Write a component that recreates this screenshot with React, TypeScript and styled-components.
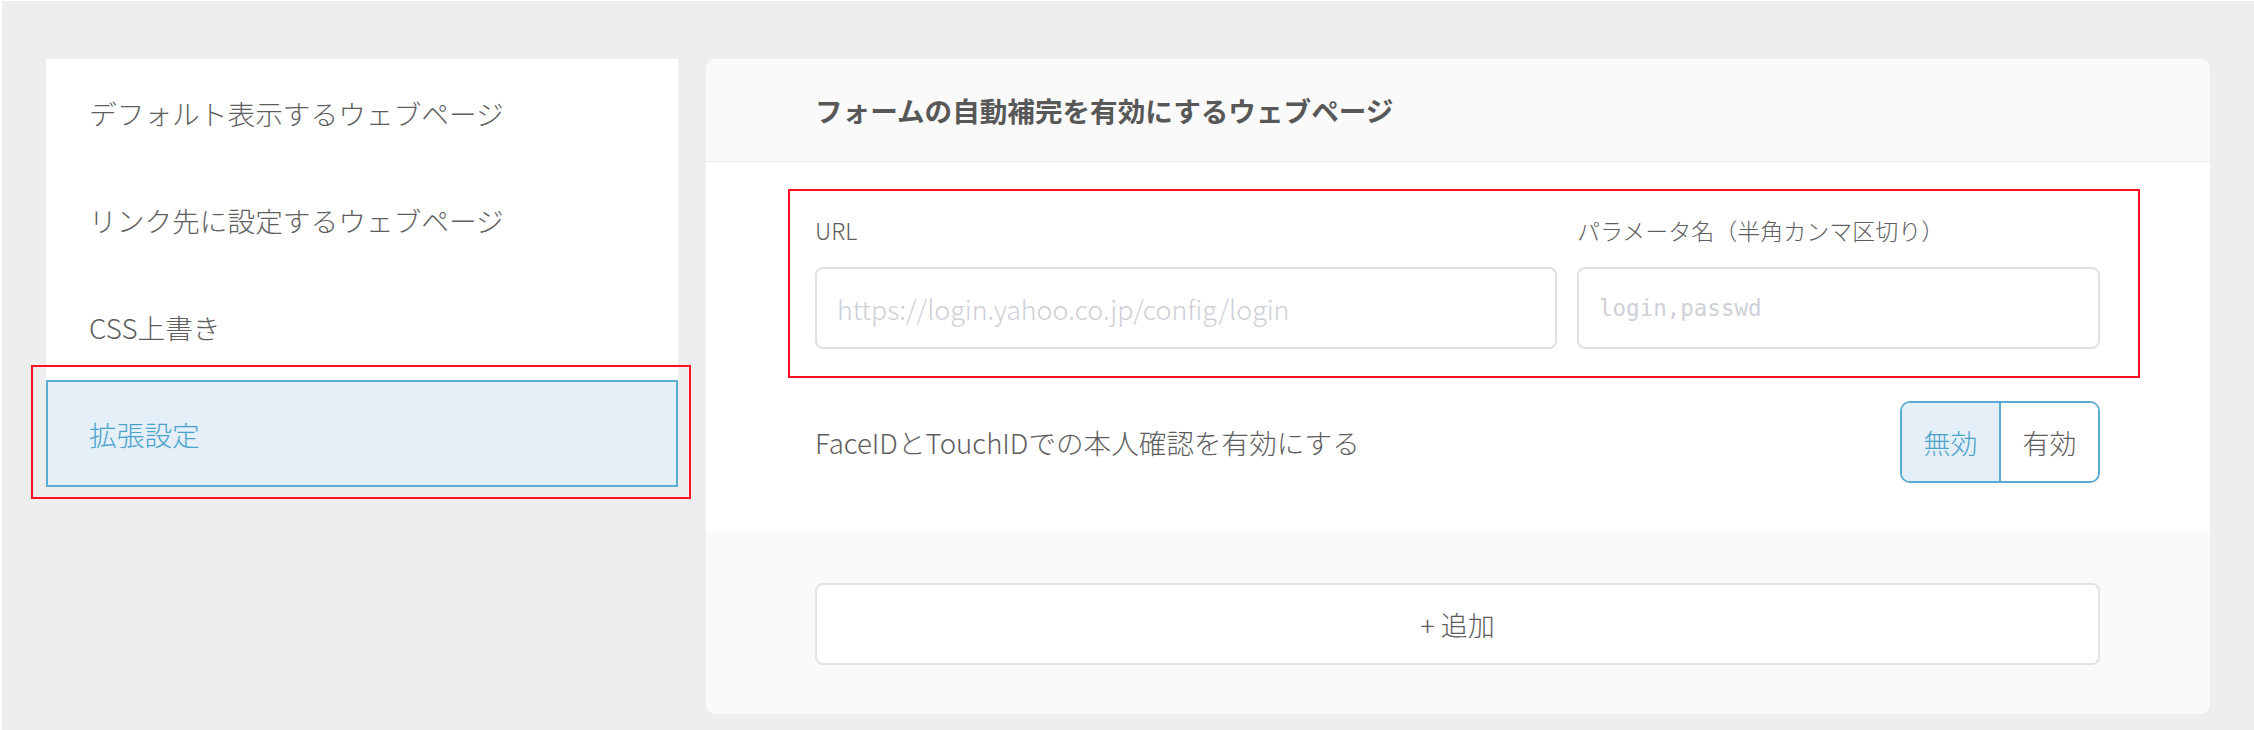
import React from "react";
import styled, { createGlobalStyle } from "styled-components";

const GlobalStyle = createGlobalStyle`
  html, body { margin: 0; padding: 0; background: #ffffff; }
  body { font-family: "Noto Sans CJK JP", "Noto Sans", sans-serif; font-weight: 300; }
  * { box-sizing: border-box; }
`;

const Page = styled.div`
  margin: 1px 0 0 2px;
  min-height: 729px;
  background: #eeeeee;
  display: flex;
  align-items: flex-start;
  gap: 28px;
  padding: 58px 44px 16px 44px;
`;

const Sidebar = styled.nav`
  width: 632px;
  flex: none;
  background: #ffffff;
  display: flex;
  flex-direction: column;
`;

const NavItem = styled.div<{ $active?: boolean }>`
  position: relative;
  height: 107px;
  display: flex;
  align-items: center;
  padding-left: ${(p) => (p.$active ? "41px" : "43px")};
  font-size: 27.7px;
  font-weight: 300;
  color: ${(p) => (p.$active ? "#4aa3cc" : "#5e5e5e")};
  background: ${(p) => (p.$active ? "#e4eff7" : "transparent")};
  border: ${(p) => (p.$active ? "2px solid #5aadd5" : "none")};
`;

const RedMark = styled.div<{ $t: number; $r: number; $b: number; $l: number }>`
  position: absolute;
  top: ${(p) => p.$t}px;
  right: ${(p) => p.$r}px;
  bottom: ${(p) => p.$b}px;
  left: ${(p) => p.$l}px;
  border: 2px solid #ff1020;
  pointer-events: none;
`;

const Panel = styled.section`
  width: 1504px;
  flex: none;
  background: #ffffff;
  border-radius: 10px;
  overflow: hidden;
`;

const PanelHeader = styled.header`
  height: 103px;
  background: #fafafa;
  border-bottom: 1px solid #ececec;
  display: flex;
  align-items: center;
  padding-left: 109px;
  font-size: 27.6px;
  font-weight: 700;
  color: #585858;
`;

const PanelBody = styled.div`
  padding: 51px 110px 49px 109px;
`;

const FieldRow = styled.div`
  position: relative;
  display: flex;
  gap: 20px;
`;

const Field = styled.label<{ $w?: number }>`
  display: flex;
  flex-direction: column;
  gap: 20px;
  ${(p) => (p.$w ? `width: ${p.$w}px; flex: none;` : "flex: 1;")}
`;

const FieldLabel = styled.span`
  font-size: 23px;
  line-height: 34px;
  font-weight: 300;
  color: #5e5e5e;
`;

const TextInput = styled.input<{ $mono?: boolean }>`
  height: 82px;
  width: 100%;
  border: 2px solid #e0e1e7;
  border-radius: 8px;
  background: #ffffff;
  padding: 0 20px;
  font-family: ${(p) =>
    p.$mono ? `"DejaVu Sans Mono", monospace` : `"Noto Sans CJK JP", sans-serif`};
  font-size: ${(p) => (p.$mono ? "22.5px" : "26.8px")};
  font-weight: 300;
  color: #444;
  outline: none;
  &::placeholder {
    color: #cdd0d6;
  }
`;

const ToggleRow = styled.div`
  margin-top: 52px;
  display: flex;
  align-items: center;
  justify-content: space-between;
`;

const ToggleText = styled.span`
  font-size: 27.6px;
  font-weight: 300;
  color: #5e5e5e;
`;

const Segmented = styled.div`
  display: flex;
  height: 82px;
  border: 2px solid #58acd4;
  border-radius: 10px;
  overflow: hidden;
`;

const Segment = styled.button<{ $active?: boolean; $w: number }>`
  width: ${(p) => p.$w}px;
  height: 100%;
  border: none;
  margin: 0;
  padding: 0;
  font-family: "Noto Sans CJK JP", sans-serif;
  font-size: 27px;
  font-weight: 300;
  color: ${(p) => (p.$active ? "#4aa3cc" : "#5e5e5e")};
  background: ${(p) => (p.$active ? "#e4eff7" : "#ffffff")};
  & + & {
    border-left: 2px solid #58acd4;
  }
`;

const PanelFooter = styled.div`
  background: #fafafa;
  padding: 51px 110px 49px 109px;
`;

const AddButton = styled.button`
  width: 100%;
  height: 82px;
  border: 2px solid #e2e3e9;
  border-radius: 8px;
  background: #ffffff;
  font-family: "Noto Sans CJK JP", sans-serif;
  font-size: 27px;
  font-weight: 300;
  color: #5a5a5a;
`;

export default function App() {
  return (
    <>
      <GlobalStyle />
      <Page>
        <Sidebar>
          <NavItem>デフォルト表示するウェブページ</NavItem>
          <NavItem>リンク先に設定するウェブページ</NavItem>
          <NavItem>CSS上書き</NavItem>
          <NavItem $active>
            拡張設定
            <RedMark $t={-17} $r={-15} $b={-14} $l={-17} />
          </NavItem>
        </Sidebar>
        <Panel>
          <PanelHeader>フォームの自動補完を有効にするウェブページ</PanelHeader>
          <PanelBody>
            <FieldRow>
              <Field $w={742}>
                <FieldLabel>URL</FieldLabel>
                <TextInput placeholder="https://login.yahoo.co.jp/config/login" />
              </Field>
              <Field>
                <FieldLabel>パラメータ名（半角カンマ区切り）</FieldLabel>
                <TextInput $mono placeholder="login,passwd" />
              </Field>
              <RedMark $t={-24} $r={-40} $b={-29} $l={-27} />
            </FieldRow>
            <ToggleRow>
              <ToggleText>FaceIDとTouchIDでの本人確認を有効にする</ToggleText>
              <Segmented>
                <Segment $active $w={97}>無効</Segment>
                <Segment $w={99}>有効</Segment>
              </Segmented>
            </ToggleRow>
          </PanelBody>
          <PanelFooter>
            <AddButton>+ 追加</AddButton>
          </PanelFooter>
        </Panel>
      </Page>
    </>
  );
}
